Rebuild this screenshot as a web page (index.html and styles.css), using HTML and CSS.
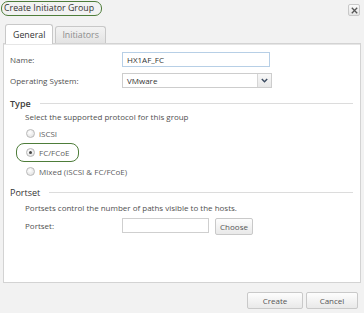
FILE: index.html
```html
<!DOCTYPE html>
<html>
<head>
<meta charset="utf-8">
<link rel="stylesheet" href="styles.css">
</head>
<body>
<div class="window">
  <div class="titlebar">
    <span class="title">Create Initiator Group</span>
    <span class="close"><svg width="7" height="7" viewBox="0 0 7 7"><path d="M0.8 0.8 L6.2 6.2 M6.2 0.8 L0.8 6.2" stroke="#555" stroke-width="1.3"/></svg></span>
  </div>
  <div class="tabs">
    <div class="tab active">General</div>
    <div class="tab">Initiators</div>
  </div>
  <div class="panel">
    <div class="row first">
      <label class="lbl">Name:</label>
      <div class="input name-input">HX1AF_FC</div>
    </div>
    <div class="row">
      <label class="lbl">Operating System:</label>
      <div class="select">
        <span class="sel-text">VMware</span>
        <span class="sel-btn"><svg width="7" height="5" viewBox="0 0 7 5"><path d="M0.8 1 L3.5 3.8 L6.2 1" fill="none" stroke="#3a4a60" stroke-width="1.4"/></svg></span>
      </div>
    </div>
    <div class="section type-section">
      <span class="sec-title">Type</span><span class="sec-line"></span>
    </div>
    <div class="desc">Select the supported protocol for this group</div>
    <div class="radios">
      <div class="radio-row"><span class="radio"></span><span>iSCSI</span></div>
      <div class="radio-row selected"><span class="radio checked"></span><span>FC/FCoE</span></div>
      <div class="radio-row"><span class="radio"></span><span>Mixed (iSCSI &amp; FC/FCoE)</span></div>
    </div>
    <div class="section portset-section">
      <span class="sec-title">Portset</span><span class="sec-line"></span>
    </div>
    <div class="desc desc2">Portsets control the number of paths visible to the hosts.</div>
    <div class="row portset-row">
      <label class="lbl lbl-indent">Portset:</label>
      <div class="input portset-input"></div>
      <button class="btn choose">Choose</button>
    </div>
  </div>
  <div class="footer">
    <button class="btn fbtn create">Create</button>
    <button class="btn fbtn cancel">Cancel</button>
  </div>
</div>
</body>
</html>
```
FILE: styles.css
```css
html, body {
  margin: 0;
  padding: 0;
  background: #f2f2f2;
}
body {
  font-family: "Open Sans", "Liberation Sans", sans-serif;
  font-size: 8px;
  color: #444;
  width: 364px;
  height: 313px;
  overflow: hidden;
}
.window {
  display: flex;
  flex-direction: column;
}
.titlebar {
  height: 18px;
  display: flex;
  align-items: flex-start;
  justify-content: space-between;
  padding: 1px 4px 0 1px;
}
.title {
  display: inline-block;
  border: 1.5px solid #4e7d3a;
  border-radius: 7px;
  padding: 0 7px 0 2px;
  height: 13px;
  line-height: 13px;
  font-size: 8.8px;
  color: #333;
}
.close {
  margin-top: 3px;
  width: 10px;
  height: 10px;
  border: 1px solid #c8c8c8;
  border-radius: 2px;
  background: linear-gradient(#fafafa, #e4e4e4);
  display: flex;
  align-items: center;
  justify-content: center;
}
.tabs {
  display: flex;
  align-items: flex-end;
  padding-left: 5px;
  gap: 2px;
  margin-top: 4px;
  height: 20px;
}
.tab {
  border: 1px solid #c8c8c8;
  border-bottom: none;
  border-radius: 3px 3px 0 0;
  height: 16px;
  line-height: 16px;
  padding: 0 6px;
  font-size: 8.8px;
  color: #8c8c8c;
  background: linear-gradient(#f3f3f3, #e3e3e3);
}
.tab.active {
  height: 19px;
  line-height: 20px;
  background: #fff;
  color: #333;
  padding: 0 7px;
  position: relative;
  z-index: 1;
  margin-bottom: -1px;
}
.panel {
  margin: 0 3px;
  height: 238px;
  background: #fff;
  border: 1px solid #d3d3d3;
  box-shadow: inset 0 1px 0 #e6e6e6;
  padding: 0 6px;
  display: flex;
  flex-direction: column;
}
.row {
  display: flex;
  align-items: center;
  height: 15px;
  margin-top: 6px;
}
.row.first {
  margin-top: 8px;
}
.lbl {
  width: 112px;
  flex: none;
  color: #505050;
}
.input {
  box-sizing: border-box;
  height: 15px;
  border: 1px solid #b7cfe6;
  line-height: 13px;
  padding-left: 4px;
  color: #333;
  background: #fff;
}
.name-input {
  width: 148px;
}
.select {
  box-sizing: border-box;
  width: 150px;
  height: 15px;
  border: 1px solid #cdcdcd;
  display: flex;
  color: #333;
}
.sel-text {
  flex: 1;
  line-height: 13px;
  padding-left: 4px;
}
.sel-btn {
  width: 13px;
  border-left: 1px solid #d6d6d6;
  background: linear-gradient(#f8f8f8, #e8e8e8);
  display: flex;
  align-items: center;
  justify-content: center;
}
.section {
  display: flex;
  align-items: center;
  height: 12px;
}
.type-section {
  margin-top: 9px;
}
.portset-section {
  margin-top: 5px;
}
.sec-title {
  font-size: 9px;
  font-weight: 600;
  color: #404040;
}
.sec-line {
  flex: 1;
  height: 1px;
  background: #dcdcdc;
  margin-left: 9px;
  margin-right: 1px;
}
.portset-section .sec-title {
  font-weight: 400;
  color: #333;
}
.desc {
  margin-top: 2px;
  padding-left: 15px;
  height: 12px;
  line-height: 12px;
  color: #505050;
}
.desc2 {
  margin-top: 4px;
}
.radios {
  display: flex;
  flex-direction: column;
  align-items: flex-start;
  margin-top: 1px;
}
.radio-row {
  display: flex;
  align-items: center;
  height: 19px;
  margin-left: 16px;
  color: #606060;
}
.radio-row.selected {
  box-sizing: border-box;
  margin-left: 6px;
  padding-left: 9px;
  padding-right: 8px;
  border: 1.5px solid #4e7d3a;
  border-radius: 8px;
}
.radio {
  width: 7px;
  height: 7px;
  border: 1px solid #b9b9b9;
  border-radius: 50%;
  background: radial-gradient(circle at 40% 35%, #fff, #dcdcdc);
  margin-right: 4px;
  box-sizing: content-box;
  display: flex;
  align-items: center;
  justify-content: center;
}
.radio.checked::after {
  content: "";
  width: 3px;
  height: 3px;
  border-radius: 50%;
  background: #444;
}
.portset-row {
  margin-top: 4px;
}
.lbl-indent {
  padding-left: 15px;
  width: 97px;
}
.portset-input {
  width: 87px;
  border-color: #cfcfcf;
}
.btn {
  font-family: "Open Sans", "Liberation Sans", sans-serif;
  font-size: 8px;
  color: #555;
  border: 1px solid #c9c9c9;
  border-radius: 2px;
  background: linear-gradient(#fdfdfd, #e9e9e9);
  padding: 0;
  margin: 0;
}
.choose {
  margin-left: 6px;
  width: 38px;
  height: 17px;
  margin-top: 2px;
}
.footer {
  display: flex;
  justify-content: flex-end;
  gap: 3px;
  padding-right: 6px;
  margin-top: 9px;
}
.fbtn {
  height: 17px;
  width: 56px;
}
.cancel {
  width: 52px;
}
```
